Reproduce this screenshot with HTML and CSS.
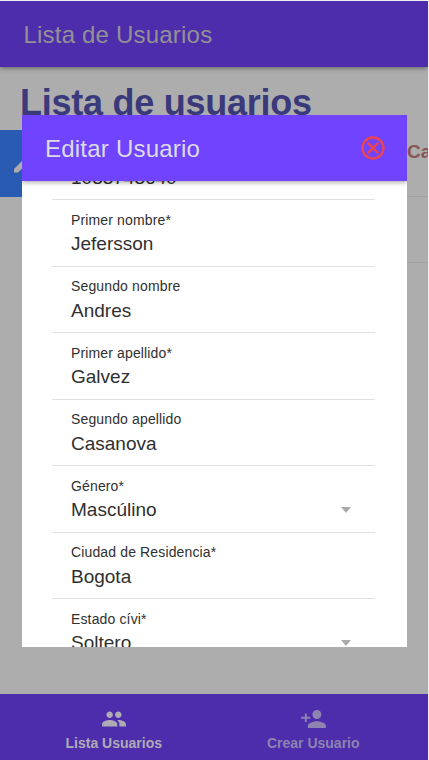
FILE: index.html
```
<!DOCTYPE html>
<html lang="es">
<head>
<meta charset="utf-8">
<title>Lista de Usuarios</title>
<link rel="stylesheet" href="styles.css">
</head>
<body>
<div class="app">
  <header class="toolbar">Lista de Usuarios</header>
  <main class="content">
    <h1>Lista de usuarios</h1>
    <div class="user-row">
      <button class="edit" aria-label="Editar"><svg width="28" height="28" viewBox="0 0 28 28"><path d="M3 23.500v-3.500L17 6l4 4L7 23.500z"/></svg></button>
      <div class="cell">Ca</div>
    </div>
    <div class="next-row"></div>
  </main>
  <nav class="tabs">
    <a class="tab active">
      <svg width="26" height="28" viewBox="0 0 24 24"><path d="M16 11c1.660 0 2.990-1.340 2.990-3S17.660 5 16 5s-3 1.340-3 3 1.340 3 3 3zm-8 0c1.660 0 2.990-1.340 2.990-3S9.660 5 8 5 5 6.340 5 8s1.340 3 3 3zm0 2c-2.330 0-7 1.170-7 3.500V19h14v-2.500c0-2.330-4.670-3.500-7-3.500zm8 0c-.29 0-.62.020-.97.050 1.160.84 1.970 1.970 1.970 3.450V19h6v-2.500c0-2.330-4.670-3.500-7-3.500z"/></svg>
      <span>Lista Usuarios</span>
    </a>
    <a class="tab">
      <svg width="27" height="28" viewBox="0 0 24 24"><path d="M15 12c2.210 0 4-1.790 4-4s-1.790-4-4-4-4 1.790-4 4 1.790 4 4 4zm-9-2V7H4.300v3H1v1.700h3.300v3H6v-3h3V10H6zm9 4c-2.670 0-8 1.340-8 4v2h16v-2c0-2.660-5.330-4-8-4z"/></svg>
      <span>Crear Usuario</span>
    </a>
  </nav>
  <section class="modal">
    <header class="modal-head">
      <span>Editar Usuario</span>
      <svg width="24" height="24" viewBox="0 0 24 24"><circle cx="12" cy="12" r="10.500"/><path d="M6.800 6.800l10.400 10.400M17.200 6.800L6.800 17.200"/></svg>
    </header>
    <div class="form">
      <div class="field first"><label>Identificación*</label><div class="value">1033743640</div></div>
      <div class="field"><label>Primer nombre*</label><div class="value">Jefersson</div></div>
      <div class="field"><label>Segundo nombre</label><div class="value">Andres</div></div>
      <div class="field"><label>Primer apellido*</label><div class="value">Galvez</div></div>
      <div class="field"><label>Segundo apellido</label><div class="value">Casanova</div></div>
      <div class="field"><label>Género*</label><div class="value">Mascúlino<i class="caret"></i></div></div>
      <div class="field"><label>Ciudad de Residencia*</label><div class="value">Bogota</div></div>
      <div class="field"><label>Estado cívi*</label><div class="value">Soltero<i class="caret"></i></div></div>
    </div>
  </section>
</div>
</body>
</html>
```
FILE: styles.css
```
* { box-sizing: border-box; }
body {
  margin: 0;
  background: #f0f0f2;
  font-family: "Liberation Sans", Arial, sans-serif;
}
.app {
  position: relative;
  display: flex;
  flex-direction: column;
  width: 428px;
  height: 760px;
  border-top: 1px solid #f0f0f2;
  background: #adadad;
  overflow: hidden;
}
.toolbar {
  flex: none;
  height: 66px;
  padding-left: 23.500px;
  background: #4d2dac;
  color: #949195;
  font-size: 24px;
  line-height: 67px;
  letter-spacing: .2px;
  box-shadow: 0 1px 5px rgba(0, 0, 0, .45);
}
.content { flex: 1; min-height: 0; }
h1 {
  margin: 15px 0 6px 20px;
  color: #3a397c;
  font-size: 36px;
  line-height: 42px;
  letter-spacing: -.26px;
}
.user-row { display: flex; height: 67px; }
.edit {
  width: 66px;
  height: 67px;
  padding: 2px 0 0 11px;
  border: 0;
  background: #295bb2;
  text-align: left;
}
.edit svg { fill: #adadad; }
.cell {
  flex: 1;
  padding: 11px 0 0 341px;
  color: #895554;
  border-bottom: 1px solid #a0a0a0;
  font-size: 19px;
  font-weight: bold;
  white-space: nowrap;
  overflow: hidden;
}
.next-row { height: 66px; margin-left: 66px; border-bottom: 1px solid #a0a0a0; }
.tabs {
  flex: none;
  display: flex;
  height: 66px;
  padding: 0 15px 0 14px;
  background: #4d2dac;
}
.tab {
  flex: 1;
  display: flex;
  flex-direction: column;
  align-items: center;
  padding-top: 10.500px;
  color: #8e83b1;
  font-size: 14px;
  font-weight: bold;
  line-height: 20px;
}
.tab svg { fill: currentColor; }
.active { color: #afabb5; }
.modal {
  position: absolute;
  left: 22px;
  top: 114px;
  display: flex;
  flex-direction: column;
  width: 385px;
  height: 532px;
  background: #fff;
  overflow: hidden;
}
.modal-head {
  z-index: 1;
  flex: none;
  display: flex;
  align-items: center;
  justify-content: space-between;
  height: 66px;
  padding: 1px 22px 0 23px;
  background: #7044ff;
  color: #dedbe2;
  font-size: 24px;
  letter-spacing: .22px;
  box-shadow: 0 1px 5px rgba(0, 0, 0, .4);
}
.modal-head svg { margin-top: -2px; fill: none; stroke: #eb4451; stroke-width: 2.400; }
.form { flex: 1; min-height: 0; padding: 0 32px 0 30px; }
.field {
  height: 66.5px;
  padding: 11.500px 0 0 19px;
  border-bottom: 1px solid #e0e0e0;
  color: #303030;
}
.first { margin-top: -47.500px; }
label {
  display: block;
  font-size: 14px;
  line-height: 16px;
  letter-spacing: .14px;
}
.value {
  display: flex;
  align-items: center;
  justify-content: space-between;
  padding-right: 24px;
  margin-top: 4.500px;
  font-size: 19px;
  line-height: 24px;
}
.caret {
  border: 5.500px solid transparent;
  border-top: 6px solid #aaa;
  border-bottom: 0;
}
```
